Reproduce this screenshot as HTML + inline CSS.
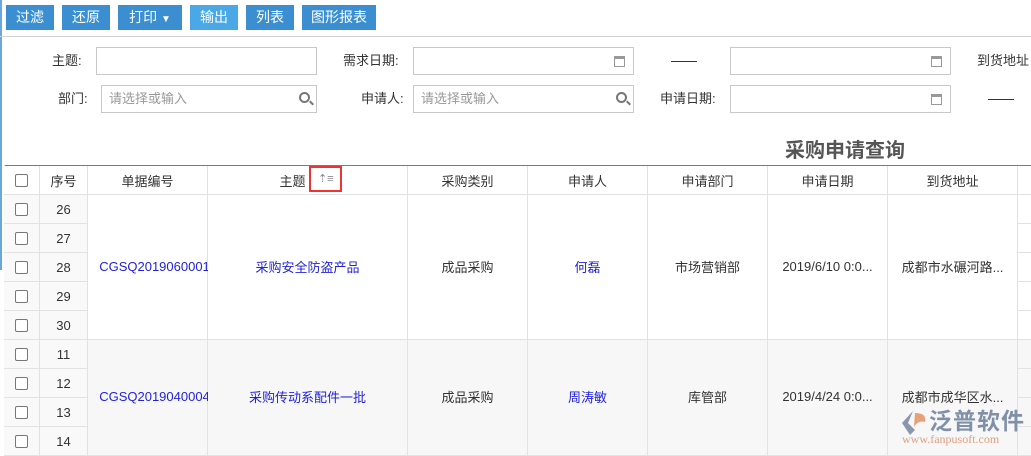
<!DOCTYPE html>
<html><head><meta charset="utf-8"><style>
*{margin:0;padding:0;box-sizing:border-box}
body{width:1031px;height:456px;overflow:hidden;background:#fff;font-family:"Liberation Sans","Noto Sans CJK SC",sans-serif;font-size:13px;color:#333;position:relative}
.a{position:absolute}
.btn{position:absolute;top:5px;height:25px;background:#3b8fd0;color:#fff;font-size:14px;line-height:25px;text-align:center}
.lbl{position:absolute;font-size:13px;color:#333;line-height:16px}
.inp{position:absolute;height:28px;border:1px solid #c8c8c8;background:#fff;color:#999;font-size:13px;line-height:26px;padding-left:7px}
.cal{position:absolute;right:8px;top:8px;width:11px;height:11px;border:1px solid #999;border-top-width:3px}
.srch{position:absolute;right:6px;top:6px;width:11px;height:11px;border:2px solid #777;border-radius:50%}
.srch:after{content:"";position:absolute;left:8px;top:8px;width:5px;height:2px;background:#777;transform:rotate(45deg)}
.c{position:absolute;border-right:1px solid #e2e2e2;border-bottom:1px solid #e2e2e2;text-align:center;display:flex;align-items:center;justify-content:center;white-space:nowrap}
.cb{width:13px;height:13px;border:1px solid #777;border-radius:2px;background:#fff}
.lnk{color:#2222dd}
</style></head><body>
<div class="a" style="left:0;top:0;width:2px;height:270px;background:#6aa8dc"></div>
<div class="btn" style="left:6px;width:48px">过滤</div>
<div class="btn" style="left:62px;width:48px">还原</div>
<div class="btn" style="left:118px;width:64px">打印 <span style="font-size:10px">▼</span></div>
<div class="btn" style="left:190px;width:48px;background:#4aa8e6">输出</div>
<div class="btn" style="left:246px;width:48px">列表</div>
<div class="btn" style="left:302px;width:74px">图形报表</div>
<div class="a" style="left:0;top:36px;width:1031px;height:1px;background:#d0d0d0"></div>

<div class="lbl" style="left:52px;top:53px">主题:</div>
<div class="inp" style="left:96px;top:47px;width:221px"></div>
<div class="lbl" style="left:343px;top:53px">需求日期:</div>
<div class="inp" style="left:413px;top:47px;width:221px"><div class="cal"></div></div>
<div class="a" style="left:671px;top:61px;width:26px;height:1px;background:#333"></div>
<div class="inp" style="left:730px;top:47px;width:221px"><div class="cal"></div></div>
<div class="lbl" style="left:977px;top:53px">到货地址</div>

<div class="lbl" style="left:58px;top:91px">部门:</div>
<div class="inp" style="left:101px;top:85px;width:216px">请选择或输入<div class="srch"></div></div>
<div class="lbl" style="left:361px;top:91px">申请人:</div>
<div class="inp" style="left:413px;top:85px;width:221px">请选择或输入<div class="srch"></div></div>
<div class="lbl" style="left:660px;top:91px">申请日期:</div>
<div class="inp" style="left:730px;top:85px;width:221px"><div class="cal"></div></div>
<div class="a" style="left:988px;top:99px;width:26px;height:1px;background:#333"></div>

<div class="a" style="left:785px;top:134px;font-size:20px;font-weight:bold;color:#555">采购申请查询</div>

<div class="a" style="left:4px;top:165px;width:1027px;height:1px;background:#4a86b8"></div>
<div class="a" style="left:4px;top:165px;width:1px;height:291px;background:#d8d8d8"></div>
<div id="t"></div>
<div class="a" style="left:309px;top:166px;width:33px;height:26px;border:2px solid #e33"></div>
<div class="a" style="left:318px;top:172px;font-size:11px;color:#888">⇡≡</div>

<div class="a" style="left:900px;top:409px;width:28px;height:28px;">
<svg width="28" height="28"><path d="M13 2 L2 14 L10 26 L15 21 L8 14 Z" fill="#8a98ad"/><path d="M15 4 Q27 4 25 13 Q18 11 14 18 Z" fill="#e8a078"/></svg></div>
<div class="a" style="left:929px;top:406px;font-size:23px;line-height:30px;color:#8090a8;font-weight:bold;letter-spacing:1px">泛普软件</div>
<div class="a" style="left:902px;top:432px;font-size:12px;color:#e0a080;font-family:'Liberation Serif',serif">www.fanpusoft.com</div>

<script>
var cols=[4,40,88,208,408,528,648,768,888,1018,1040];
var hd=['','序号','单据编号','主题','采购类别','申请人','申请部门','申请日期','到货地址',''];
var h='';
function c(i,y,hh,txt,bg,extra){h+='<div class="c" style="left:'+cols[i]+'px;top:'+y+'px;width:'+(cols[i+1]-cols[i])+'px;height:'+hh+'px;background:'+(bg||'transparent')+';'+(extra||'')+'">'+txt+'</div>';}
for(var i=0;i<10;i++)c(i,166,29,i==0?'<div class="cb"></div>':(i==3?'主题<span style="width:30px"></span>':hd[i]),'#fff');
var g=[{y:195,n:[26,27,28,29,30],bg:'#fff',d:['CGSQ2019060001','采购安全防盗产品','成品采购','何磊','市场营销部','2019/6/10 0:0...','成都市水碾河路...']},
{y:340,n:[11,12,13,14],bg:'#f7f7f7',d:['CGSQ2019040004','采购传动系配件一批','成品采购','周涛敏','库管部','2019/4/24 0:0...','成都市成华区水...']}];
g.forEach(function(G){var rh=29;for(var k=0;k<G.n.length;k++){var y=G.y+k*rh;c(0,y,rh,'<div class="cb"></div>','#f9f9f9');c(1,y,rh,G.n[k],'#f9f9f9');c(9,y,rh,'',G.bg);}
var H=G.n.length*rh;for(var j=0;j<7;j++){var t=G.d[j];var cl=(j==0||j==1||j==3)?'lnk':'';var st=j==0?' style="margin-left:12px;margin-right:-2px"':'';c(j+2,G.y,H,'<span class="'+cl+'"'+st+'>'+t+'</span>',G.bg,'padding-bottom:2px');}});
document.getElementById('t').outerHTML=h;
</script>
</body></html>
